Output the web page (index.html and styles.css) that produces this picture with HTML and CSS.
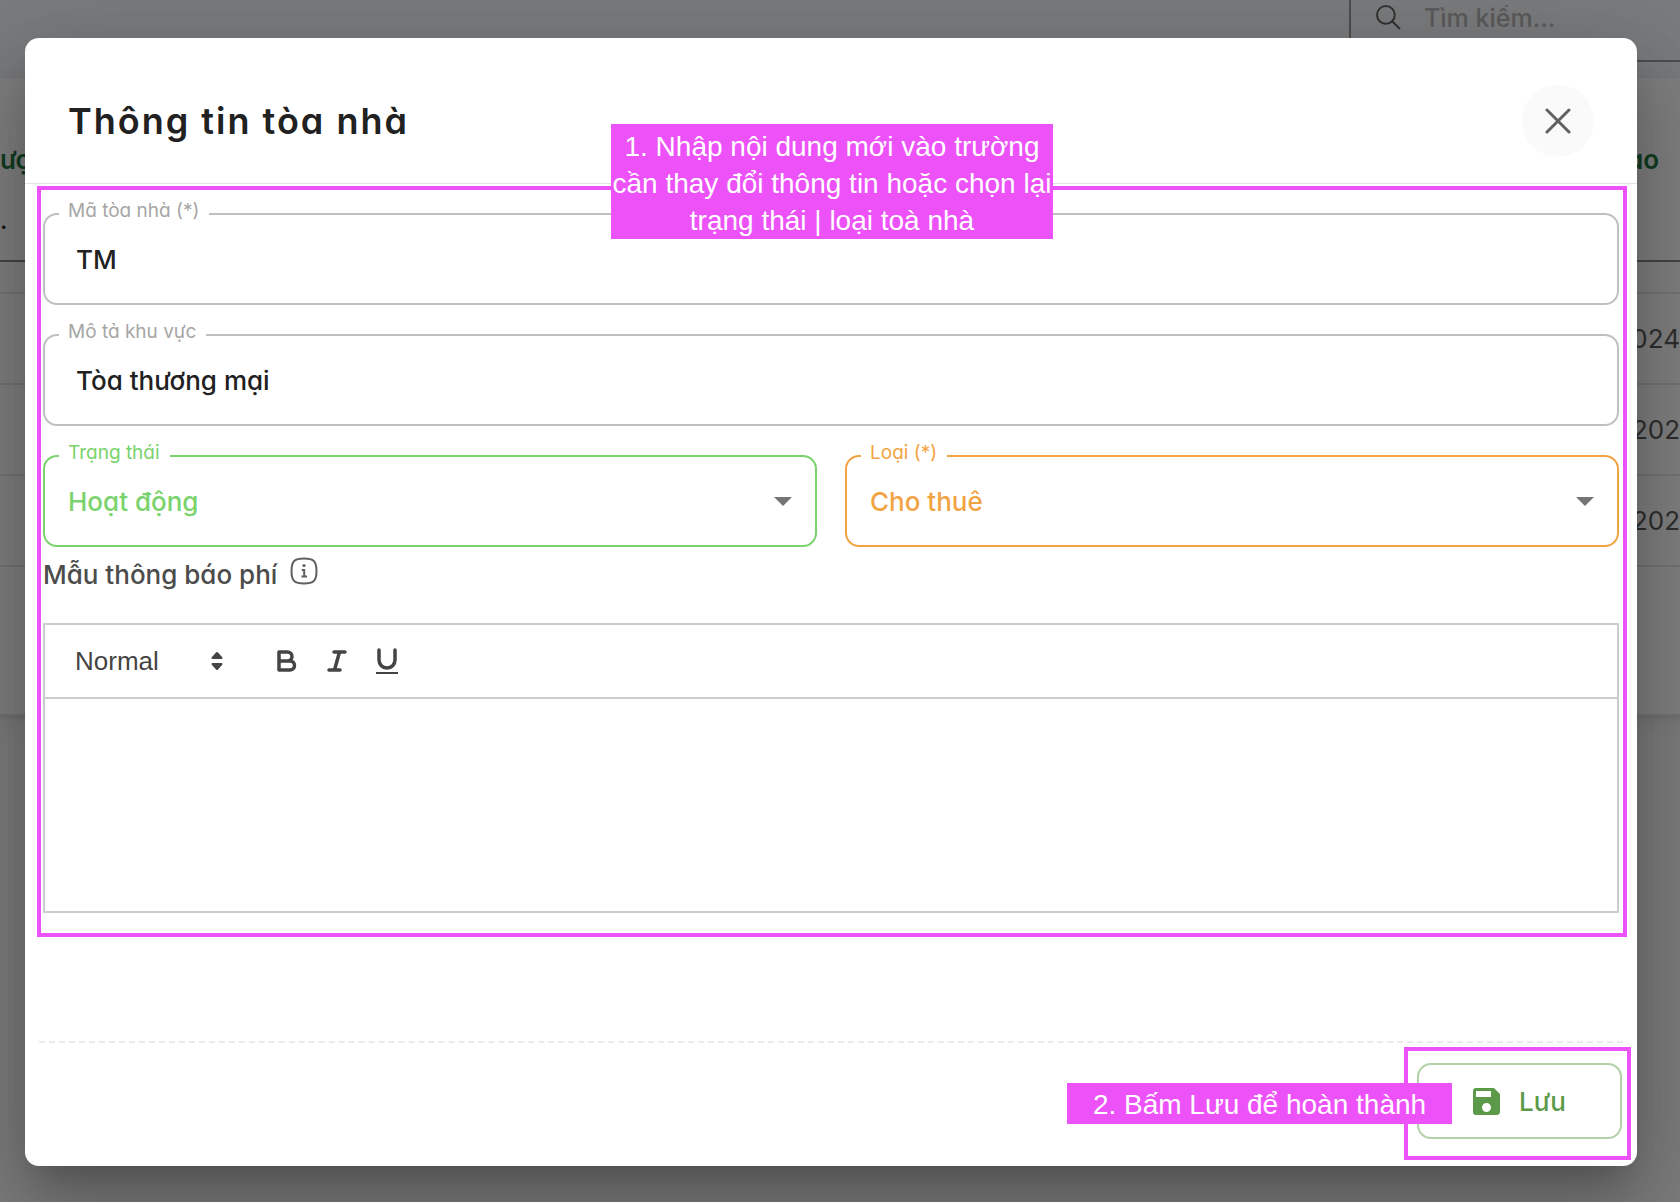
FILE: index.html
```html
<!DOCTYPE html>
<html lang="vi">
<head>
<meta charset="utf-8">
<meta name="viewport" content="width=device-width, initial-scale=1">
<title>Thông tin tòa nhà</title>
<link rel="stylesheet" href="styles.css">
</head>
<body>
<div class="page">
  <header class="topbar">
    <label class="search">
      <svg class="search-icon" viewBox="0 0 24 24" aria-hidden="true"><circle cx="9.500" cy="9.500" r="8.500"/><path d="M15.800 15.800 23 23"/></svg>
      <input class="search-input" type="search" placeholder="Tìm kiếm..." aria-label="Tìm kiếm">
    </label>
  </header>
  <table class="list">
    <thead>
      <tr class="list-head"><th>ược</th><th class="end">ao</th></tr>
      <tr class="list-filter"><td>.</td><td></td></tr>
    </thead>
    <tbody>
      <tr class="list-gap"><td></td><td></td></tr>
      <tr><td></td><td class="end">024</td></tr>
      <tr><td></td><td class="end">202</td></tr>
      <tr><td></td><td class="end">202</td></tr>
      <tr class="list-foot"><td></td><td></td></tr>
    </tbody>
  </table>
</div>

<div class="backdrop">
  <form class="dialog" role="dialog" aria-labelledby="dialog-title">
    <header class="dialog-head">
      <h1 class="dialog-title" id="dialog-title">Thông tin tòa nhà</h1>
      <button class="close" type="button" aria-label="Đóng">
        <svg class="close-icon" viewBox="0 0 26 26" aria-hidden="true"><path d="M2 2 24 24"/><path d="M24 2 2 24"/></svg>
      </button>
    </header>

    <section class="form-area">
      <p class="note note-form">1. Nhập nội dung mới vào trường cần thay đổi thông tin hoặc chọn lại trạng thái | loại toà nhà</p>
      <div class="fields">
        <fieldset class="field">
          <legend><label for="code">Mã tòa nhà (*)</label></legend>
          <input class="control control-text" id="code" type="text" value="TM">
        </fieldset>
        <fieldset class="field">
          <legend><label for="desc">Mô tả khu vực</label></legend>
          <input class="control control-text" id="desc" type="text" value="Tòa thương mại">
        </fieldset>
        <div class="field-row">
          <fieldset class="field field-green">
            <legend><label for="status">Trạng thái</label></legend>
            <select class="control" id="status"><option>Hoạt động</option></select>
            <svg class="caret" viewBox="0 0 18 9" aria-hidden="true"><path d="M0 0H18L9 9Z"/></svg>
          </fieldset>
          <fieldset class="field field-orange">
            <legend><label for="kind">Loại (*)</label></legend>
            <select class="control" id="kind"><option>Cho thuê</option></select>
            <svg class="caret" viewBox="0 0 18 9" aria-hidden="true"><path d="M0 0H18L9 9Z"/></svg>
          </fieldset>
        </div>
      </div>

      <div class="editor-label">
        <label for="template">Mẫu thông báo phí</label>
        <svg class="info" viewBox="0 0 28 28" aria-hidden="true"><path class="ring" d="M14 1.500C23.500 1.500 26.500 4 26.500 14S23.500 26.500 14 26.500 1.500 24 1.500 14 4.500 1.500 14 1.500Z"/><circle cx="14" cy="8.500" r="1.600"/><path class="stem" d="M11.800 13H14.200V19.500M11.500 19.500H17"/></svg>
      </div>

      <div class="editor">
        <div class="toolbar">
          <div class="format">
            <select class="format-select" aria-label="Kiểu chữ"><option>Normal</option></select>
            <svg class="updown" viewBox="0 0 12 20" aria-hidden="true"><path d="M6 2 10.500 7H1.500ZM6 18 10.500 13H1.500Z"/></svg>
          </div>
          <button class="tool" type="button" aria-label="Đậm"><svg viewBox="0 0 26 26" aria-hidden="true"><path d="M5 4H13.500A4.500 4.500 0 0 1 13.500 13H5ZM5 13H16A4.500 4.500 0 0 1 16 22H5Z"/></svg></button>
          <button class="tool" type="button" aria-label="Nghiêng"><svg viewBox="0 0 26 26" aria-hidden="true"><path d="M10 4H21M5 22H16M15.500 4 10.500 22"/></svg></button>
          <button class="tool" type="button" aria-label="Gạch chân"><svg viewBox="0 0 26 26" aria-hidden="true"><path d="M5 2V12A8 8 0 0 0 21 12V2"/><path class="thin" d="M2 25H24"/></svg></button>
        </div>
        <textarea class="editor-body" id="template"></textarea>
      </div>
    </section>

    <footer class="dialog-foot">
      <div class="save-frame">
        <button class="save" type="submit">
          <svg class="save-icon" viewBox="3 3 18 18" aria-hidden="true"><path d="M17 3H5a2 2 0 0 0-2 2v14a2 2 0 0 0 2 2h14c1.100 0 2-.9 2-2V7l-4-4zm-5 16c-1.660 0-3-1.340-3-3s1.340-3 3-3 3 1.340 3 3-1.340 3-3 3zm3-10H5V5h10v4z"/></svg>
          Lưu
        </button>
        <p class="note note-save">2. Bấm Lưu để hoàn thành</p>
      </div>
    </footer>
  </form>
</div>
</body>
</html>
```
FILE: styles.css
```css
* { box-sizing: border-box; }

:root {
  --mark: #ec52f8;
  --ui: Inter, "Open Sans", sans-serif;
  --arial: "Liberation Sans", Arial, sans-serif;
}

body {
  margin: 0;
  font-family: var(--ui);
  font-size: 26px;
  font-feature-settings: "cv11";
  color: #212121;
  background: #f8f8f8;
}

button, input, select, textarea {
  font: inherit;
  font-feature-settings: inherit;
  color: inherit;
  margin: 0;
}

/* page behind the dialog */
.page { min-height: 100vh; overflow: hidden; }

.topbar {
  display: flex;
  justify-content: flex-end;
  height: 78px;
  padding-bottom: 16px;
  background: #f4f7fa;
}

.search {
  display: flex;
  align-items: flex-start;
  gap: 23px;
  width: 331px;
  padding: 5px 0 0 25px;
  border-left: 2px solid #9a9a9a;
  border-bottom: 2px solid #9a9a9a;
}

.search-icon { flex: none; width: 25px; height: 25px; fill: none; stroke: #666; stroke-width: 2; }

.search-input {
  width: 100%;
  height: 26px;
  padding: 0;
  border: 0;
  background: none;
  font-size: 25px;
  line-height: 26px;
  font-weight: 500;
}

.search-input::placeholder { color: #b4b4b4; opacity: 1; }

.list {
  width: 100%;
  border-collapse: separate;
  border-spacing: 0;
  background: #fff;
  box-shadow: 0 2px 4px rgba(0, 0, 0, .08), 0 4px 24px rgba(0, 0, 0, .08);
}

.list th, .list td { padding: 0; border-bottom: 2px solid #e6e6e6; text-align: left; font-weight: 400; }
.list tr { height: 91px; }
.list tbody td { color: #5c5c5c; }
.list .end { text-align: right; }
.list .list-head { height: 136px; }
.list .list-head th { padding-top: 26px; border: 0; color: #1f7a43; font-weight: 600; }
.list .list-head .end { padding-right: 21px; }
.list .list-filter { height: 48px; }
.list .list-filter td { border-color: #888; line-height: 12px; vertical-align: top; }
.list .list-gap { height: 32px; }
.list .list-foot { height: 149px; }

/* dialog */
.backdrop {
  position: absolute;
  inset: 0;
  display: flex;
  align-items: stretch;
  padding: 38px 43px 36px 25px;
  overflow: hidden;
  background: rgba(0, 0, 0, .5);
}

.dialog {
  flex: 1;
  display: flex;
  flex-direction: column;
  min-width: 0;
  border-radius: 14px;
  background: #fff;
  box-shadow: 0 22px 30px -14px rgba(0, 0, 0, .2), 0 48px 76px 6px rgba(0, 0, 0, .14), 0 18px 92px 16px rgba(0, 0, 0, .12);
}

.dialog-head {
  display: flex;
  align-items: center;
  justify-content: space-between;
  padding: 47px 43px 26px 43px;
  border-bottom: 1px solid #e4e4e4;
}

.dialog-title { margin: 0; font-size: 36px; line-height: 48px; font-weight: 600; letter-spacing: 2px; }

.close {
  display: grid;
  place-items: center;
  width: 72px;
  height: 72px;
  padding: 0;
  border: 0;
  border-radius: 50%;
  background: #fafafa;
}

.close-icon { width: 26px; height: 26px; fill: none; stroke: #606060; stroke-width: 3; stroke-linecap: round; }

.form-area {
  position: relative;
  margin: 2px 10px 0 12px;
  padding: 11px 4px 20px 2px;
  border: 4px solid var(--mark);
}

.fields { display: flex; flex-direction: column; gap: 17px; }
.field-row { display: grid; grid-template-columns: 1fr 1fr; gap: 28px; }

.field {
  position: relative;
  min-width: 0;
  margin: 0;
  padding: 0;
  border: 2px solid #c0c0c0;
  border-radius: 14px;
  color: #a6a6a6;
}

.field legend {
  margin-left: 14px;
  padding: 0 10px 6px 9px;
  font-size: 19px;
  line-height: 20px;
}

.control {
  display: block;
  width: 100%;
  height: 66px;
  padding: 0 23px;
  border: 0;
  background: none;
  font-weight: 500;
  line-height: 66px;
  outline: 0;
  appearance: none;
}

.control-text { padding: 0 31px; color: #212121; }
.field .control { margin-bottom: 10px; }

.field-green { border-color: #7ad36c; color: #7ad36c; }
.field-orange { border-color: #f2a443; color: #f2a443; }

.caret {
  position: absolute;
  right: 23px;
  top: 28px;
  width: 18px;
  height: 9px;
  fill: #757575;
  pointer-events: none;
}

.editor-label {
  display: flex;
  align-items: center;
  gap: 13px;
  height: 54px;
  margin-bottom: 22px;
  color: #4c4c4c;
  font-weight: 500;
}

.info { width: 28px; height: 28px; margin-bottom: 6px; fill: #606060; }
.info .ring { fill: none; stroke: #606060; stroke-width: 2; }
.info .stem { fill: none; stroke: #606060; stroke-width: 2; }

.editor { border: 2px solid #ccc; }

.toolbar {
  display: flex;
  align-items: center;
  height: 74px;
  padding-left: 30px;
  border-bottom: 2px solid #ccc;
}

.format { display: flex; align-items: center; width: 148px; margin-right: 51px; }

.format-select {
  flex: 1;
  min-width: 0;
  padding: 0;
  border: 0;
  background: none;
  color: #444;
  font-family: var(--arial);
  appearance: none;
}

.updown { width: 12px; height: 20px; fill: #444; stroke: #444; stroke-width: 2; stroke-linejoin: round; }

.tool { width: 26px; height: 28px; margin-right: 24px; padding: 0; border: 0; background: none; }
.tool svg { display: block; width: 26px; height: 28px; fill: none; stroke: #444; stroke-width: 3.500; stroke-linejoin: round; stroke-linecap: round; overflow: visible; }
.tool .thin { stroke-width: 2; stroke-linecap: butt; }

.editor-body { display: block; width: 100%; height: 212px; padding: 24px 30px; border: 0; background: none; outline: 0; resize: none; }

.dialog-foot {
  display: flex;
  justify-content: flex-end;
  margin: auto 14px 0;
  padding: 4px 0 6px;
  border-top: 2px dashed #ebebeb;
}

.save-frame {
  position: relative;
  margin-right: -8px;
  padding: 12px 5px 17px 9px;
  border: 4px solid var(--mark);
}

.save {
  display: flex;
  align-items: center;
  justify-content: center;
  gap: 19px;
  width: 205px;
  height: 76px;
  padding: 0;
  border: 2px solid #b3d1a8;
  border-radius: 14px;
  background: #fff;
  color: #5c9a49;
  font-weight: 500;
}

.save-icon { width: 27px; height: 27px; fill: #5c9a49; }

/* tutorial notes laid over the dialog */
.note {
  position: absolute;
  margin: 0;
  background: var(--mark);
  color: #fff;
  font-family: var(--arial);
  font-size: 28px;
  text-align: center;
}

.note-form { z-index: 1; top: -66px; left: 50%; width: 442px; padding-top: 4px; line-height: 37px; transform: translateX(-50%); }
.note-save { right: 175px; top: 32px; width: 385px; padding-top: 2px; line-height: 39px; white-space: nowrap; }
```
